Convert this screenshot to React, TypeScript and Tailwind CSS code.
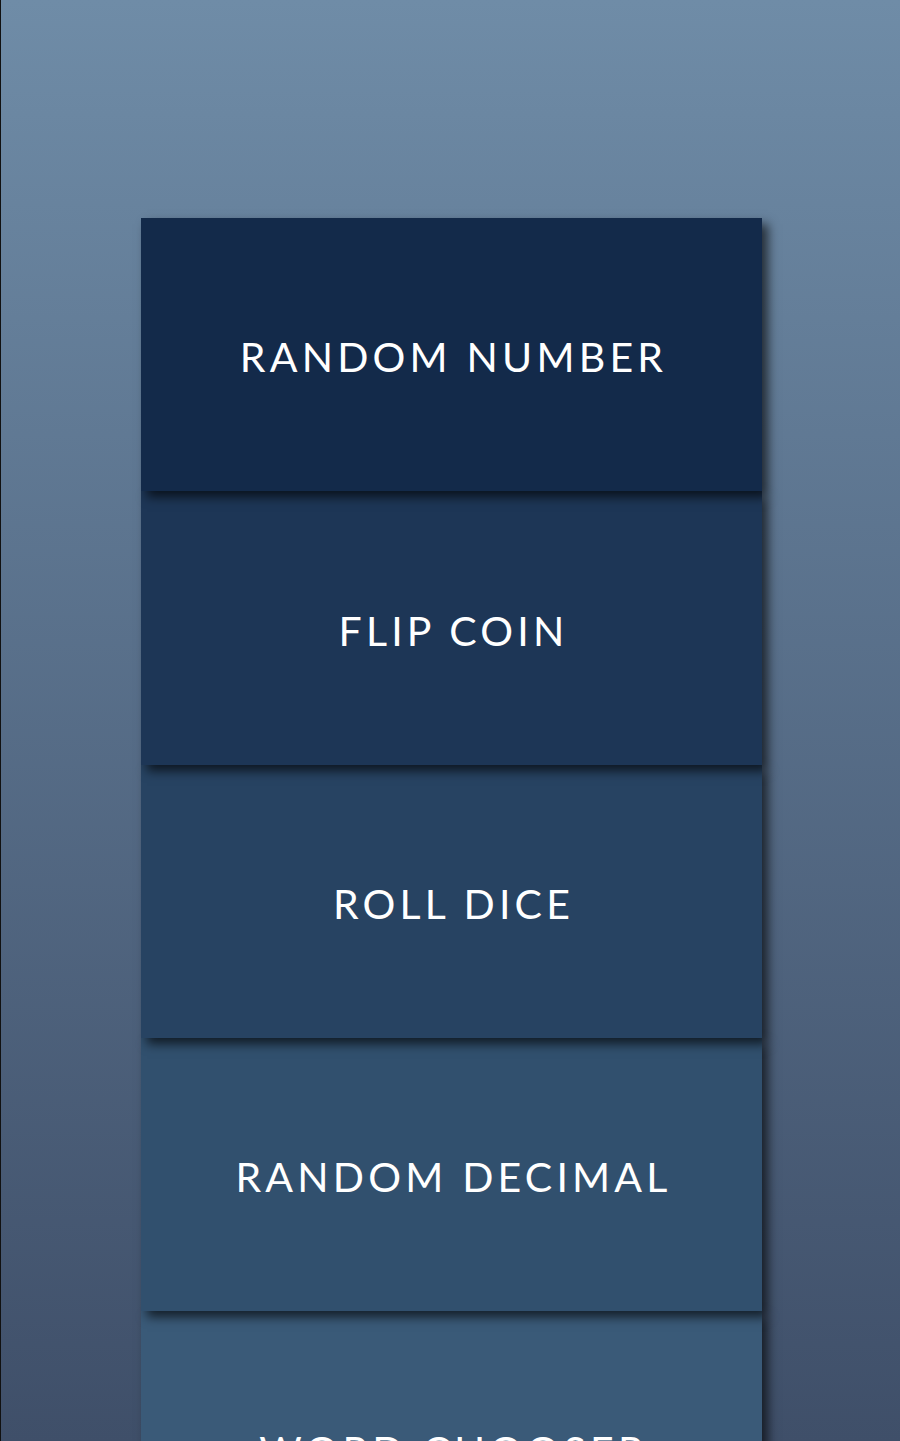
import React from 'react';

// Tool list - each row gets a slightly lighter shade of blue
const tools = [
    { label: "RANDOM NUMBER", bg: "bg-[#132a4a]", z: "z-[5]" },
    { label: "FLIP COIN", bg: "bg-[#1d3656]", z: "z-[4]" },
    { label: "ROLL DICE", bg: "bg-[#274362]", z: "z-[3]" },
    { label: "RANDOM DECIMAL", bg: "bg-[#31506e]", z: "z-[2]" },
    { label: "WORD CHOOSER", bg: "bg-[#3a5a78]", z: "z-[1]" },
];

const App: React.FC = () => {
    return (
        <div className="min-h-[1441px] h-[1441px] overflow-hidden border-l border-[#111] bg-gradient-to-b from-[#6f8ca7] to-[#3f4f69]">
            <div className="pt-[218px] flex flex-col items-center pl-[2px]">
                {tools.map((tool) => (
                    <button
                        key={tool.label}
                        className={`relative ${tool.z} ${tool.bg} w-[621px] h-[273.3px] shrink-0 flex items-center justify-center shadow-[6px_6px_10px_rgba(0,0,0,0.65)]`}
                    >
                        <span
                            className="text-white text-[41px] tracking-[4.2px] pt-[5px] pl-[4px]"
                            style={{ fontFamily: "Lato, 'Noto Sans', sans-serif" }}
                        >
                            {tool.label}
                        </span>
                    </button>
                ))}
            </div>
        </div>
    );
};

export default App;
